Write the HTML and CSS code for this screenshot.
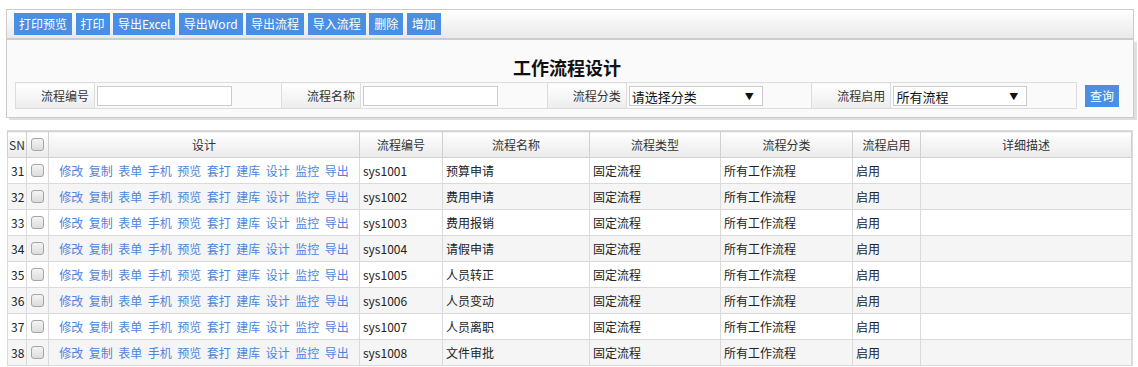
FILE: index.html
```html
<!DOCTYPE html>
<html lang="zh-CN">
<head>
    <meta charset="UTF-8">
    <title>工作流程设计</title>
    <link rel="stylesheet" href="styles.css">
</head>
<body>
    <div class="panel">
        <div class="toolbar">
            <button class="btn">打印预览</button>
            <button class="btn">打印</button>
            <button class="btn">导出Excel</button>
            <button class="btn">导出Word</button>
            <button class="btn">导出流程</button>
            <button class="btn">导入流程</button>
            <button class="btn">删除</button>
            <button class="btn">增加</button>
        </div>
        <div class="search">
            <h1 class="title">工作流程设计</h1>
            <div class="filter">
                <table class="filter-table">
                    <colgroup>
                        <col class="col-lbl">
                        <col>
                        <col class="col-lbl">
                        <col>
                        <col class="col-lbl">
                        <col>
                        <col class="col-lbl">
                        <col>
                    </colgroup>
                    <tr>
                        <td class="lbl">流程编号</td>
                        <td class="fld"><input type="text"></td>
                        <td class="lbl">流程名称</td>
                        <td class="fld"><input type="text"></td>
                        <td class="lbl">流程分类</td>
                        <td class="fld">
                            <span class="select-box"><select><option>请选择分类</option></select></span>
                        </td>
                        <td class="lbl">流程启用</td>
                        <td class="fld">
                            <span class="select-box"><select><option>所有流程</option></select></span>
                        </td>
                    </tr>
                </table>
                <button class="btn btn-query">查询</button>
            </div>
        </div>
    </div>

    <div class="grid-wrap">
        <table class="grid">
            <colgroup>
                <col style="width:19px">
                <col style="width:22px">
                <col style="width:311px">
                <col style="width:83px">
                <col style="width:147px">
                <col style="width:131px">
                <col style="width:132px">
                <col style="width:68px">
                <col>
            </colgroup>
            <thead>
                <tr>
                    <th class="sn">SN</th>
                    <th><input type="checkbox"></th>
                    <th>设计</th>
                    <th>流程编号</th>
                    <th>流程名称</th>
                    <th>流程类型</th>
                    <th>流程分类</th>
                    <th>流程启用</th>
                    <th>详细描述</th>
                </tr>
            </thead>
            <tbody id="grid-body"></tbody>
        </table>
    </div>

    <script>
        const flows = [
            ['31', 'sys1001', '预算申请'],
            ['32', 'sys1002', '费用申请'],
            ['33', 'sys1003', '费用报销'],
            ['34', 'sys1004', '请假申请'],
            ['35', 'sys1005', '人员转正'],
            ['36', 'sys1006', '人员变动'],
            ['37', 'sys1007', '人员离职'],
            ['38', 'sys1008', '文件审批']
        ];
        const actions = ['修改', '复制', '表单', '手机', '预览', '套打', '建库', '设计', '监控', '导出'];

        const body = document.getElementById('grid-body');
        flows.forEach(([sn, code, name]) => {
            const links = actions.map(a => `<a href="#">${a}</a>`).join('');
            const tr = document.createElement('tr');
            tr.innerHTML = `
                <td class="sn">${sn}</td>
                <td class="cb"><input type="checkbox"></td>
                <td class="actions"><div class="links">${links}</div></td>
                <td>${code}</td>
                <td>${name}</td>
                <td>固定流程</td>
                <td>所有工作流程</td>
                <td>启用</td>
                <td></td>`;
            body.appendChild(tr);
        });
    </script>
</body>
</html>
```

FILE: styles.css
```css
body {
    margin: 0;
    padding: 9px 0 0 0;
    font-family: "Microsoft YaHei", "Noto Sans CJK SC", sans-serif;
    font-size: 12px;
    color: #222;
    background: #fff;
}

.panel {
    margin: 0 4px 0 6px;
}

.toolbar {
    display: flex;
    gap: 3.5px;
    height: 31px;
    padding: 3px 0 0 7px;
    box-sizing: border-box;
    border: 1px solid #ccc;
    border-bottom-width: 2px;
    background: linear-gradient(#ffffff, #e9e9e9);
}

.btn {
    height: 22px;
    padding: 0 5px;
    border: none;
    background: #4a8fe3;
    color: #fff;
    font-family: inherit;
    font-size: 12px;
    line-height: 22px;
    cursor: pointer;
}

.search {
    padding: 0 14px 8px 8px;
    border: 1px solid #ccc;
    border-top: none;
    background: #fafafa;
    box-shadow: 3px 2px 0 #e0e0e0;
}

.title {
    margin: 0;
    padding-top: 15px;
    font-size: 18px;
    line-height: 25px;
    text-align: center;
    color: #111;
}

.filter {
    display: flex;
    align-items: center;
    gap: 8px;
    margin-top: 2px;
}

.filter-table {
    flex: 1;
    border-collapse: collapse;
    table-layout: fixed;
}

.filter-table .col-lbl {
    width: 79px;
}

.filter-table td {
    height: 25px;
    padding: 0 1px;
    border: 1px solid #ddd;
}

.filter-table .lbl {
    padding-right: 5px;
    text-align: right;
    color: #333;
    background: linear-gradient(#ffffff, #ececec);
}

.filter-table .fld {
    background: #fafafa;
}

.filter-table input {
    display: block;
    width: 135px;
    height: 20px;
    margin-left: 1px;
    box-sizing: border-box;
    border: 1px solid #ccc;
    background: #fff;
}

.select-box {
    position: relative;
    display: block;
    width: 134px;
    margin-left: 1px;
}

.select-box select {
    display: block;
    width: 134px;
    height: 20px;
    padding: 0 0 0 2px;
    border: 1px solid #ccc;
    border-radius: 0;
    background: #fff;
    appearance: none;
    font-family: inherit;
    font-size: 13px;
    color: #111;
}

.select-box::after {
    content: "▼";
    position: absolute;
    right: 9px;
    top: 4px;
    font-size: 9px;
    color: #111;
    pointer-events: none;
}

.btn-query {
    flex-shrink: 0;
}

.grid-wrap {
    margin: 12px 5px 0 7px;
    border-top: 1px solid #ddd;
    border-right: 1px solid #ddd;
}

.grid {
    width: 100%;
    border-collapse: collapse;
    table-layout: fixed;
}

.grid th,
.grid td {
    height: 25px;
    padding: 0 3px;
    border: 1px solid #dadada;
    white-space: nowrap;
    overflow: hidden;
}

.grid th {
    font-weight: normal;
    color: #333;
    background: linear-gradient(#ffffff, #ebebeb);
    border-color: #d0d0d0;
}

.grid th.sn,
.grid td.sn {
    padding: 0 1px;
    text-align: left;
}

.grid td.sn {
    padding-left: 3px;
}

.grid input[type="checkbox"] {
    display: block;
    margin: 0 auto;
    width: 13px;
    height: 13px;
    appearance: none;
    border: 1px solid #a6a6a6;
    border-radius: 3px;
    background: linear-gradient(#f4f4f4, #dcdcdc);
}

.grid tbody tr:nth-child(even) {
    background: #f5f5f5;
}

.grid td.actions {
    padding: 0;
}

.links {
    display: flex;
    justify-content: center;
    gap: 5.5px;
}

.links a {
    color: #4f84dc;
    text-decoration: none;
}
```
